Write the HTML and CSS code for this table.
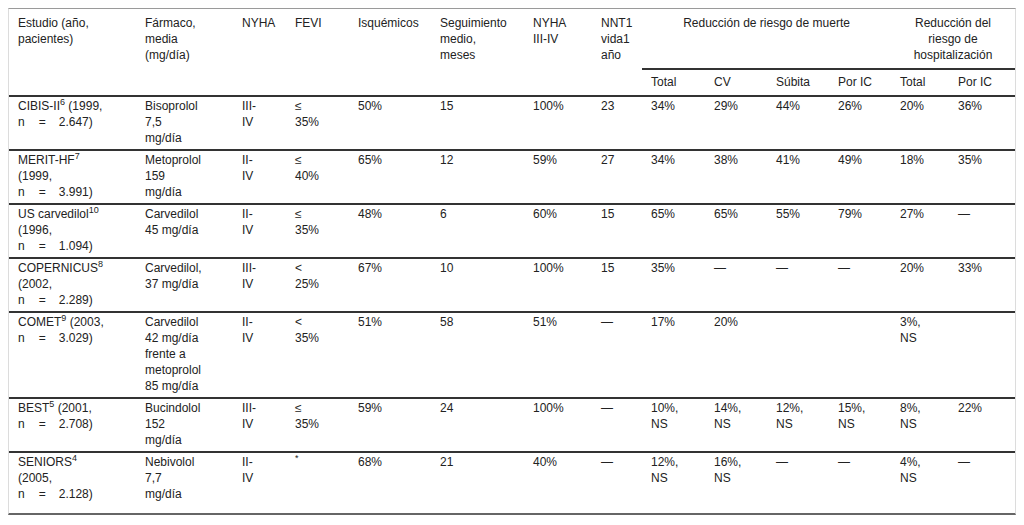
FILE: index.html
```html
<!DOCTYPE html>
<html lang="es">
<head>
<meta charset="utf-8">
<title>Tabla betabloqueantes</title>
<link rel="stylesheet" href="styles.css">
</head>
<body>
<div class="table-wrap">
<table class="data-table">
<colgroup>
<col class="c1"><col class="c2"><col class="c3"><col class="c4"><col class="c5"><col class="c6"><col class="c7"><col class="c8"><col class="c9"><col class="c10"><col class="c11"><col class="c12"><col class="c13"><col class="c14">
</colgroup>
<thead>
<tr>
<th rowspan="2">Estudio (año, pacientes)</th>
<th rowspan="2">Fármaco, media (mg/día)</th>
<th rowspan="2">NYHA</th>
<th rowspan="2">FEVI</th>
<th rowspan="2">Isquémicos</th>
<th rowspan="2">Seguimiento medio, meses</th>
<th rowspan="2">NYHA III-IV</th>
<th rowspan="2">NNT1 vida1 año</th>
<th colspan="4" class="group">Reducción de riesgo de muerte</th>
<th colspan="2" class="group">Reducción del riesgo de hospitalización</th>
</tr>
<tr class="sub">
<th>Total</th><th>CV</th><th>Súbita</th><th>Por IC</th><th>Total</th><th>Por IC</th>
</tr>
</thead>
<tbody>
<tr>
<td class="study">CIBIS-II<sup>6</sup> (1999, n<span class="eq">=</span>2.647)</td>
<td>Bisoprolol 7,5 mg/día</td><td>III-IV</td><td>≤ 35%</td><td>50%</td><td>15</td><td>100%</td><td>23</td><td>34%</td><td>29%</td><td>44%</td><td>26%</td><td>20%</td><td>36%</td>
</tr>
<tr>
<td class="study">MERIT-HF<sup>7</sup> (1999, n<span class="eq">=</span>3.991)</td>
<td>Metoprolol 159 mg/día</td><td>II-IV</td><td>≤ 40%</td><td>65%</td><td>12</td><td>59%</td><td>27</td><td>34%</td><td>38%</td><td>41%</td><td>49%</td><td>18%</td><td>35%</td>
</tr>
<tr>
<td class="study">US carvedilol<sup>10</sup> (1996, n<span class="eq">=</span>1.094)</td>
<td>Carvedilol 45 mg/día</td><td>II-IV</td><td>≤ 35%</td><td>48%</td><td>6</td><td>60%</td><td>15</td><td>65%</td><td>65%</td><td>55%</td><td>79%</td><td>27%</td><td>—</td>
</tr>
<tr>
<td class="study">COPERNICUS<sup>8</sup> (2002, n<span class="eq">=</span>2.289)</td>
<td>Carvedilol, 37 mg/día</td><td>III-IV</td><td>&lt; 25%</td><td>67%</td><td>10</td><td>100%</td><td>15</td><td>35%</td><td>—</td><td>—</td><td>—</td><td>20%</td><td>33%</td>
</tr>
<tr>
<td class="study">COMET<sup>9</sup> (2003, n<span class="eq">=</span>3.029)</td>
<td>Carvedilol 42 mg/día frente a metoprolol 85 mg/día</td><td>II-IV</td><td>&lt; 35%</td><td>51%</td><td>58</td><td>51%</td><td>—</td><td>17%</td><td>20%</td><td></td><td></td><td>3%, NS</td><td></td>
</tr>
<tr>
<td class="study">BEST<sup>5</sup> (2001, n<span class="eq">=</span>2.708)</td>
<td>Bucindolol 152 mg/día</td><td>III-IV</td><td>≤ 35%</td><td>59%</td><td>24</td><td>100%</td><td>—</td><td>10%, NS</td><td>14%, NS</td><td>12%, NS</td><td>15%, NS</td><td>8%, NS</td><td>22%</td>
</tr>
<tr>
<td class="study">SENIORS<sup>4</sup> (2005, n<span class="eq">=</span>2.128)</td>
<td>Nebivolol 7,7 mg/día</td><td>II-IV</td><td><sup>*</sup></td><td>68%</td><td>21</td><td>40%</td><td>—</td><td>12%, NS</td><td>16%, NS</td><td>—</td><td>—</td><td>4%, NS</td><td>—</td>
</tr>
</tbody>
</table>
</div>
</body>
</html>
```

FILE: styles.css
```css
html, body {
  background: #fff;
}
body {
  margin: 8px;
  font-family: "Liberation Sans", Arial, sans-serif;
  font-size: 12px;
  line-height: 16px;
  color: #222;
}
.table-wrap {
  border-left: 1px solid #dcdcdc;
  border-right: 1px solid #dcdcdc;
  border-top: 1px solid #9a9a9a;
  border-bottom: 2px solid #666;
  padding-bottom: 8px;
}
.data-table {
  width: 1006px;
  table-layout: fixed;
  border-collapse: collapse;
  border-spacing: 0;
}
.c1 { width: 127px; }
.c2 { width: 97px; }
.c3 { width: 53px; }
.c4 { width: 63px; }
.c5 { width: 82px; }
.c6 { width: 93px; }
.c7 { width: 68px; }
.c8 { width: 50px; }
.c9 { width: 63px; }
.c10 { width: 62px; }
.c11 { width: 62px; }
.c12 { width: 62px; }
.c13 { width: 58px; }
.c14 { width: 66px; }

.data-table th {
  font-weight: normal;
  text-align: left;
  vertical-align: top;
  padding: 6px 11px 5px 9px;
}
.data-table th.group {
  text-align: center;
  padding-left: 9px;
  padding-right: 9px;
  border-bottom: 2px solid #333;
}
.data-table tr.sub th {
  padding-top: 4px;
  padding-bottom: 5px;
}
.data-table td {
  vertical-align: top;
  text-align: left;
  padding: 1px 33px 3px 9px;
  border-top: 2px solid #333;
}
.data-table td.study {
  padding-right: 29px;
}
sup {
  font-size: 9px;
  line-height: 0;
  vertical-align: 5px;
}
.eq {
  margin: 0 13px 0 14px;
}
```
